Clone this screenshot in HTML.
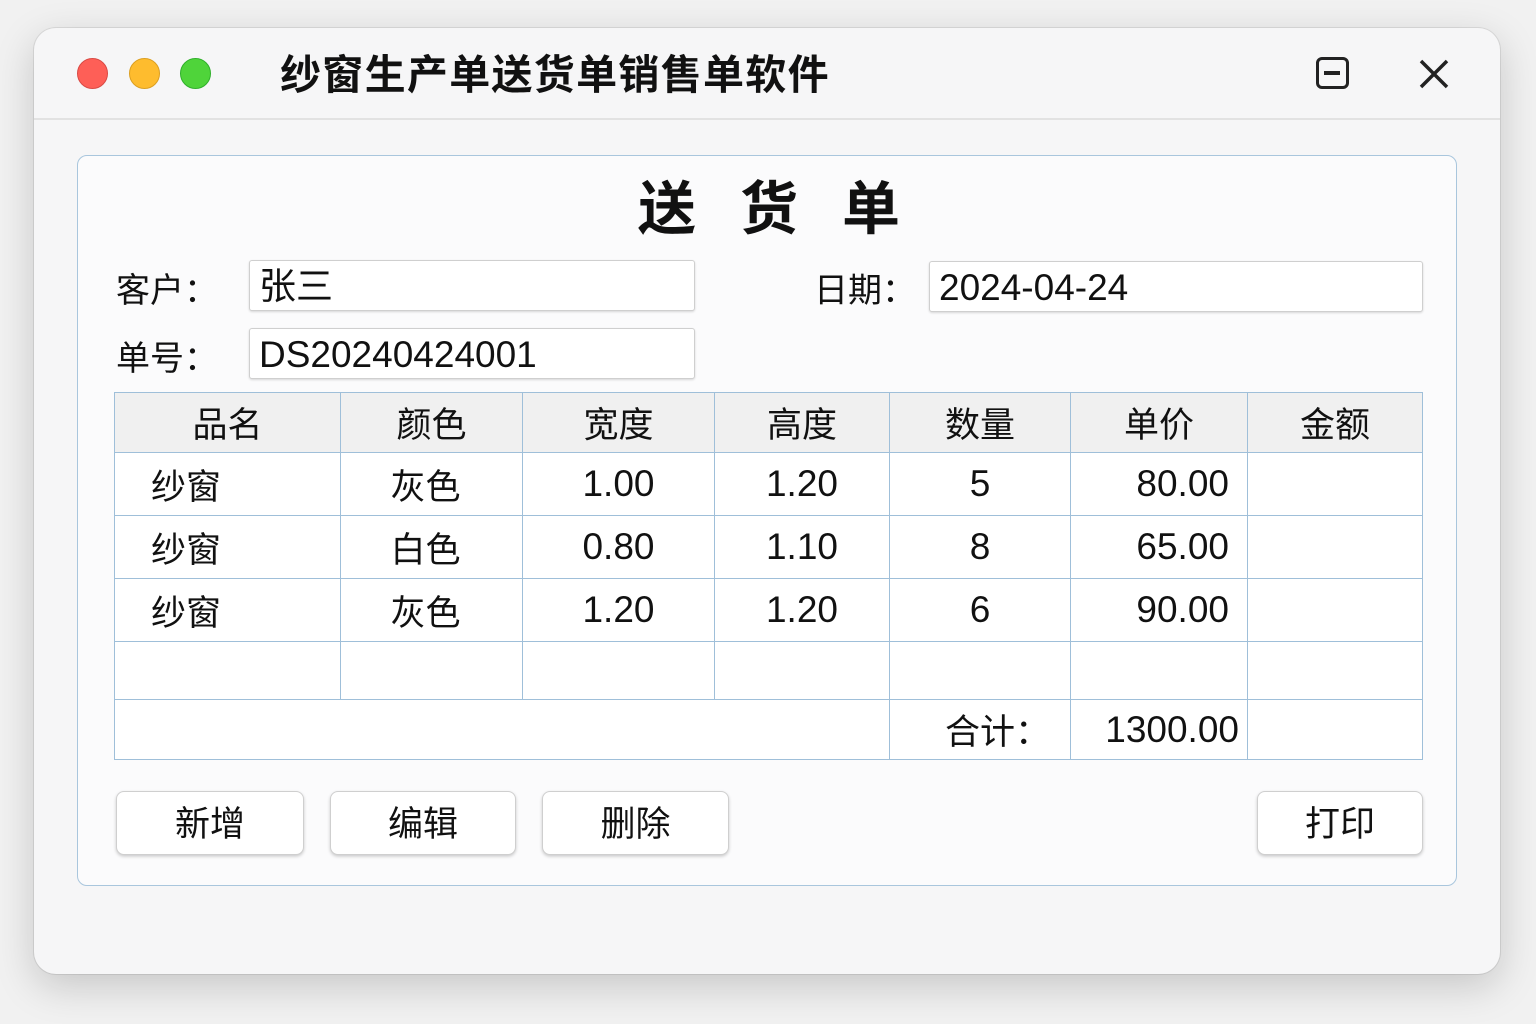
<!DOCTYPE html>
<html><head><meta charset="utf-8"><style>
*{margin:0;padding:0;box-sizing:border-box}
body{width:1536px;height:1024px;background:#f1f1f1;font-family:"Liberation Sans","Noto Sans CJK SC",sans-serif;color:#111;position:relative;overflow:hidden}
.a{position:absolute}
.win{left:34px;top:28px;width:1466px;height:946px;background:#f6f6f7;border-radius:22px;box-shadow:0 12px 40px rgba(0,0,0,.18),0 0 0 1px #ddd}
.dot{width:31px;height:31px;border-radius:50%;top:58px}
.panel{left:77px;top:155px;width:1380px;height:731px;background:#fbfbfc;border:1.5px solid #a9c6dd;border-radius:10px}
.lbl{font-size:34px}
.inp{background:#fff;border:1px solid #cfcfcf;border-radius:3px;box-shadow:0 1px 2px rgba(0,0,0,.15);font-size:37px;padding-left:9px;line-height:52px}
table{position:absolute;left:114px;top:392px;width:1309px;border-collapse:collapse;font-size:35px;background:#fff}
td{border:1.5px solid #9fbfd9;padding:0;text-align:center}
.n{font-size:37px}
.btn{background:#fff;border:1px solid #cfcfcf;border-radius:8px;box-shadow:0 1.5px 3px rgba(0,0,0,.2);font-size:35px;text-align:center;line-height:66px;top:791px;height:64px}
</style></head><body>
<div class="a win"></div>
<div class="a dot" style="left:77px;background:#fe5f57;border:1px solid #d94a44"></div>
<div class="a dot" style="left:129px;background:#febc2e;border:1px solid #dc9f20"></div>
<div class="a dot" style="left:180px;background:#4fd43a;border:1px solid #2fb02a"></div>
<div class="a" style="left:280px;top:41px;font-size:41px;font-weight:bold;letter-spacing:1.3px">纱窗生产单送货单销售单软件</div>
<div class="a" style="left:1316px;top:57px;width:33px;height:32px;border:3.5px solid #222;border-radius:6px"><div class="a" style="left:5px;top:11px;width:16px;height:4px;background:#222"></div></div>
<svg class="a" style="left:1418px;top:58px" width="32" height="32"><path d="M3 3L29 29M29 3L3 29" stroke="#222" stroke-width="3.5"/></svg>
<div class="a" style="left:34px;top:118px;width:1466px;height:2px;background:#e2e2e2"></div>
<div class="a panel"></div>
<div class="a" style="left:638px;top:162px;font-size:58px;font-weight:bold;letter-spacing:44px">送货单</div>
<div class="a lbl" style="left:116px;top:263px">客户：</div>
<div class="a lbl" style="left:116px;top:331px">单号：</div>
<div class="a lbl" style="left:814px;top:263px">日期：</div>
<div class="a inp" style="left:249px;top:260px;width:446px;height:51px">张三</div>
<div class="a inp" style="left:249px;top:328px;width:446px;height:51px">DS20240424001</div>
<div class="a inp" style="left:929px;top:261px;width:494px;height:51px">2024-04-24</div>
<table>
<tr style="height:60px;background:#f0f0f0"><td style="width:226px">品名</td><td style="width:182px">颜色</td><td style="width:192px">宽度</td><td style="width:175px">高度</td><td style="width:181px">数量</td><td style="width:177px">单价</td><td>金额</td></tr>
<tr style="height:63px"><td style="text-align:left;padding-left:36px">纱窗</td><td style="padding-right:12px">灰色</td><td class="n">1.00</td><td class="n">1.20</td><td class="n">5</td><td class="n" style="text-align:right;padding-right:18px">80.00</td><td></td></tr>
<tr style="height:63px"><td style="text-align:left;padding-left:36px">纱窗</td><td style="padding-right:12px">白色</td><td class="n">0.80</td><td class="n">1.10</td><td class="n">8</td><td class="n" style="text-align:right;padding-right:18px">65.00</td><td></td></tr>
<tr style="height:63px"><td style="text-align:left;padding-left:36px">纱窗</td><td style="padding-right:12px">灰色</td><td class="n">1.20</td><td class="n">1.20</td><td class="n">6</td><td class="n" style="text-align:right;padding-right:18px">90.00</td><td></td></tr>
<tr style="height:58px"><td></td><td></td><td></td><td></td><td></td><td></td><td></td></tr>
<tr style="height:60px"><td colspan="4"></td><td style="text-align:right;padding-right:20px">合计：</td><td class="n" style="text-align:right;padding-right:8px">1300.00</td><td></td></tr>
</table>
<div class="a btn" style="left:116px;width:188px">新增</div>
<div class="a btn" style="left:330px;width:186px">编辑</div>
<div class="a btn" style="left:542px;width:187px">删除</div>
<div class="a btn" style="left:1257px;width:166px">打印</div>
</body></html>
